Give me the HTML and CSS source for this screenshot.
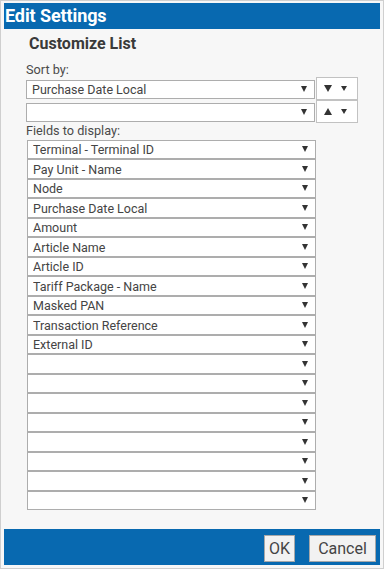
FILE: index.html
```html
<!DOCTYPE html>
<html lang="en">
<head>
    <meta charset="UTF-8">
    <title>Edit Settings</title>
    <link rel="stylesheet" href="styles.css">
</head>
<body>
    <div class="dialog">
        <div class="title-bar">Edit Settings</div>

        <div class="dialog-body">
            <h2>Customize List</h2>

            <label class="field-label">Sort by:</label>
            <div class="sort-row">
                <div class="select-wrap">
                    <select><option>Purchase Date Local</option></select>
                </div>
                <button class="sort-btn"><span class="tri-down"></span><span class="caret-sm"></span></button>
            </div>
            <div class="sort-row">
                <div class="select-wrap">
                    <select><option></option></select>
                </div>
                <button class="sort-btn"><span class="tri-up"></span><span class="caret-sm"></span></button>
            </div>

            <label class="field-label fields-label">Fields to display:</label>
            <div class="field-list" id="field-list"></div>
        </div>

        <div class="dialog-footer">
            <button class="btn btn-ok">OK</button>
            <button class="btn btn-cancel">Cancel</button>
        </div>
    </div>

    <script>
        const fields = [
            'Terminal - Terminal ID',
            'Pay Unit - Name',
            'Node',
            'Purchase Date Local',
            'Amount',
            'Article Name',
            'Article ID',
            'Tariff Package - Name',
            'Masked PAN',
            'Transaction Reference',
            'External ID'
        ];
        const list = document.getElementById('field-list');

        // 19 slots, the rest stay empty
        for (let i = 0; i < 19; i++) {
            const wrap = document.createElement('div');
            wrap.className = 'select-wrap';
            const sel = document.createElement('select');
            const opt = document.createElement('option');
            opt.textContent = fields[i] || '';
            sel.appendChild(opt);
            wrap.appendChild(sel);
            list.appendChild(wrap);
        }
    </script>
</body>
</html>
```

FILE: styles.css
```css
* {
    margin: 0;
    padding: 0;
    box-sizing: border-box;
}

body {
    font-family: Roboto, 'Liberation Sans', sans-serif;
    background-color: #ffffff;
    color: #333333;
}

.dialog {
    width: 384px;
    height: 569px;
    border: 1px solid #cfcfcf;
    padding: 2px 3px 3px 3px;
    background-color: #f7f7f7;
    display: flex;
    flex-direction: column;
}

.title-bar {
    height: 26px;
    background-color: #0869b0;
    color: #ffffff;
    font-weight: 700;
    font-size: 18px;
    line-height: 26px;
    padding-left: 1px;
    letter-spacing: -0.1px;
}

.dialog-body {
    flex: 1;
    padding: 6px 0 0 22px;
}

h2 {
    font-size: 16px;
    font-weight: 700;
    line-height: 18px;
    color: #3a3a3a;
    margin-left: 3px;
    margin-bottom: 10px;
}

.field-label {
    display: block;
    font-size: 12.7px;
    line-height: 14px;
    color: #4a4a4a;
}

.fields-label {
    margin-top: 1px;
    margin-bottom: 1px;
}

.sort-row {
    display: flex;
    align-items: center;
    width: 332px;
}

.select-wrap {
    position: relative;
    width: 289px;
    height: 19px;
}

.select-wrap::after {
    content: '';
    position: absolute;
    right: 8px;
    top: 7px;
    border-left: 3.5px solid transparent;
    border-right: 3.5px solid transparent;
    border-top: 6px solid #333333;
    pointer-events: none;
}

select {
    appearance: none;
    -webkit-appearance: none;
    width: 100%;
    height: 100%;
    border: 1px solid #adadad;
    border-radius: 0;
    background-color: #ffffff;
    font-family: Roboto, 'Liberation Sans', sans-serif;
    font-size: 12.5px;
    color: #444444;
    padding: 0 5px;
    outline: none;
}

.sort-btn {
    width: 42px;
    height: 23px;
    margin-left: 1px;
    border: 1px solid #c2c2c2;
    background-color: #ffffff;
    display: flex;
    align-items: center;
    padding-left: 7px;
    gap: 9px;
}

.tri-down {
    border-left: 4.5px solid transparent;
    border-right: 4.5px solid transparent;
    border-top: 7px solid #333333;
}

.tri-up {
    border-left: 4.5px solid transparent;
    border-right: 4.5px solid transparent;
    border-bottom: 7px solid #333333;
}

.caret-sm {
    border-left: 3px solid transparent;
    border-right: 3px solid transparent;
    border-top: 5px solid #333333;
}

.field-list {
    display: flex;
    flex-direction: column;
    padding-left: 1px;
}

.field-list .select-wrap {
    height: 19.5px;
}

.dialog-footer {
    height: 36px;
    background-color: #0869b0;
    display: flex;
    justify-content: flex-end;
    align-items: center;
    gap: 14px;
    padding-right: 4px;
}

.btn {
    height: 27px;
    border: 1px solid #a8a8a8;
    background-color: #f2f2f2;
    font-family: Roboto, 'Liberation Sans', sans-serif;
    font-size: 16px;
    color: #444444;
    margin-top: 2px;
}

.btn-ok {
    width: 31px;
}

.btn-cancel {
    width: 67px;
}
```
